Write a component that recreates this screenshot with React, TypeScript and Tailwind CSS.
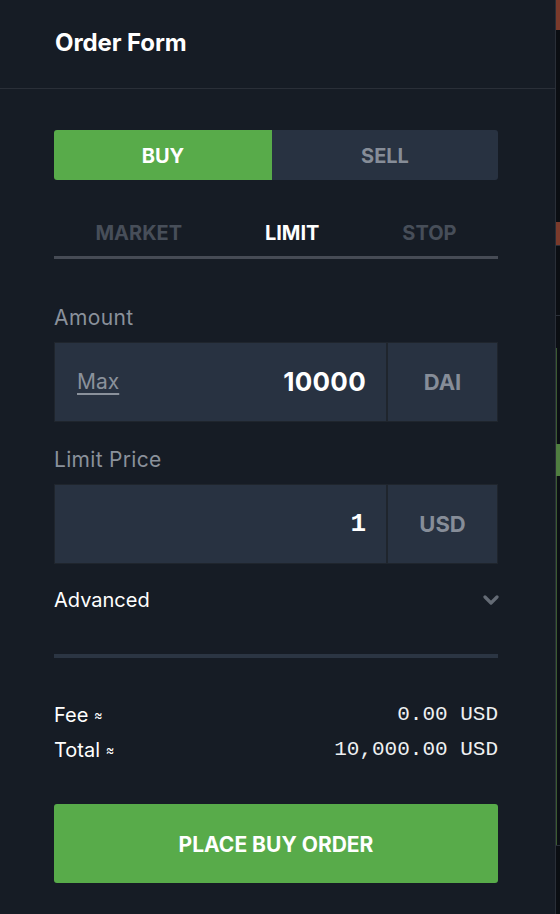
import React from "react";

const sans = { fontFamily: "Inter, 'Noto Sans', sans-serif" };
const mono = { fontFamily: "'Liberation Mono', 'DejaVu Sans Mono', monospace" };

function Strip() {
  return (
    <div className="w-[4px] flex flex-col h-[914px]">
      <div className="h-[30px] bg-[#7a3a2b]" />
      <div className="h-[192px] bg-[#0b0e13]" />
      <div className="h-[23px] bg-[#7a3a2b]" />
      <div className="h-[1px] bg-[#2a2f38]" />
      <div className="h-[69px] bg-[#0b0e13]" />
      <div className="h-[1px] bg-[#2a2f38]" />
      <div className="h-[32px] bg-[#0b0e13]" />
      <div className="h-[96px] bg-[#0b0e13] border-l border-[#3b5a31]" />
      <div className="h-[32px] bg-[#4f7d40]" />
      <div className="h-[369px] bg-[#0b0e13] border-l border-[#3b5a31]" />
      <div className="h-[1px] bg-[#2a2f38]" />
      <div className="flex-1 bg-[#0b0e13]" />
    </div>
  );
}

function InputBox({ left, value, unit, valueMono }: { left?: React.ReactNode; value: string; unit: string; valueMono?: boolean }) {
  return (
    <div className="h-[80px] flex border border-[#1f252d] bg-[#283241]">
      <div className="flex-1 flex items-center justify-between pl-[22px] pr-[20px]">
        <div>{left}</div>
        <div
          className={valueMono ? "text-white font-bold text-[26px] leading-none" : "text-white font-bold text-[26px] leading-none tracking-[0.3px]"}
          style={valueMono ? mono : sans}
        >
          {value}
        </div>
      </div>
      <div className="w-[2px] bg-[#1f252d]" />
      <div className="w-[109px] flex items-center justify-center text-[#868d98] font-bold text-[22px]" style={sans}>
        {unit}
      </div>
    </div>
  );
}

export default function App() {
  return (
    <div className="w-[560px] h-[914px] bg-[#161c25] flex overflow-hidden" style={sans}>
      <div className="w-[556px] flex flex-col border-r border-[#2a2f38]">
        <div className="h-[89px] border-b border-[#2a2f38] pl-[55px] flex items-center">
          <div className="text-white font-bold text-[24px] tracking-[-0.1px] pb-[2px]">Order Form</div>
        </div>
        <div className="pl-[54px] pr-[57px] pt-[41px] flex flex-col">
          <div className="h-[50px] flex rounded-[3px] overflow-hidden">
            <div className="w-[218px] bg-[#58ab4a] flex items-center justify-center text-white font-bold text-[20px] pt-[2px]">BUY</div>
            <div className="flex-1 bg-[#283241] flex items-center justify-center text-[#868d98] font-bold text-[20px] pt-[2px]">SELL</div>
          </div>
          <div className="h-[79px] pt-[37px] pb-[7px] border-b-[3px] border-[#464b55] flex justify-around">
            <div className="flex items-center text-[#474e59] font-bold text-[20px] h-[32px]">MARKET</div>
            <div className="flex items-center text-white font-bold text-[20px] h-[32px]">LIMIT</div>
            <div className="flex items-center text-[#474e59] font-bold text-[20px] h-[32px]">STOP</div>
          </div>
          <div className="mt-[45px] h-[28px] flex items-center text-[#8a919b] text-[21px] tracking-[0.4px]">Amount</div>
          <div className="mt-[10px]">
            <InputBox
              left={<span className="text-[#8a919b] text-[21px] underline underline-offset-[4px]">Max</span>}
              value="10000"
              unit="DAI"
            />
          </div>
          <div className="mt-[24px] h-[28px] flex items-center text-[#8a919b] text-[21px] tracking-[0.3px]">Limit Price</div>
          <div className="mt-[10px]">
            <InputBox value="1" unit="USD" valueMono />
          </div>
          <div className="mt-[22px] h-[28px] flex items-center justify-between">
            <span className="text-white text-[20px]">Advanced</span>
            <svg width="16" height="12" viewBox="0 0 16 12" className="mr-[-1px]">
              <polyline points="2,3 8,9 14,3" fill="none" stroke="#646b75" strokeWidth="3.2" strokeLinecap="round" strokeLinejoin="round" />
            </svg>
          </div>
          <div className="mt-[40px] h-[4px] bg-[#2b3543]" />
          <div className="mt-[43px] h-[28px] flex items-center justify-between">
            <span className="text-white text-[20px]">
              Fee <span className="text-[13px] relative top-[-2px]">≈</span>
            </span>
            <span className="text-[#eef0f2] text-[21px]" style={mono}>0.00 USD</span>
          </div>
          <div className="mt-[7px] h-[28px] flex items-center justify-between">
            <span className="text-white text-[20px]">
              Total <span className="text-[13px] relative top-[-2px]">≈</span>
            </span>
            <span className="text-[#eef0f2] text-[21px]" style={mono}>10,000.00 USD</span>
          </div>
          <div className="mt-[40px] h-[79px] bg-[#58ab4a] rounded-[3px] flex items-center justify-center text-white font-bold text-[21px] pt-[2px]">
            PLACE BUY ORDER
          </div>
        </div>
      </div>
      <Strip />
    </div>
  );
}
